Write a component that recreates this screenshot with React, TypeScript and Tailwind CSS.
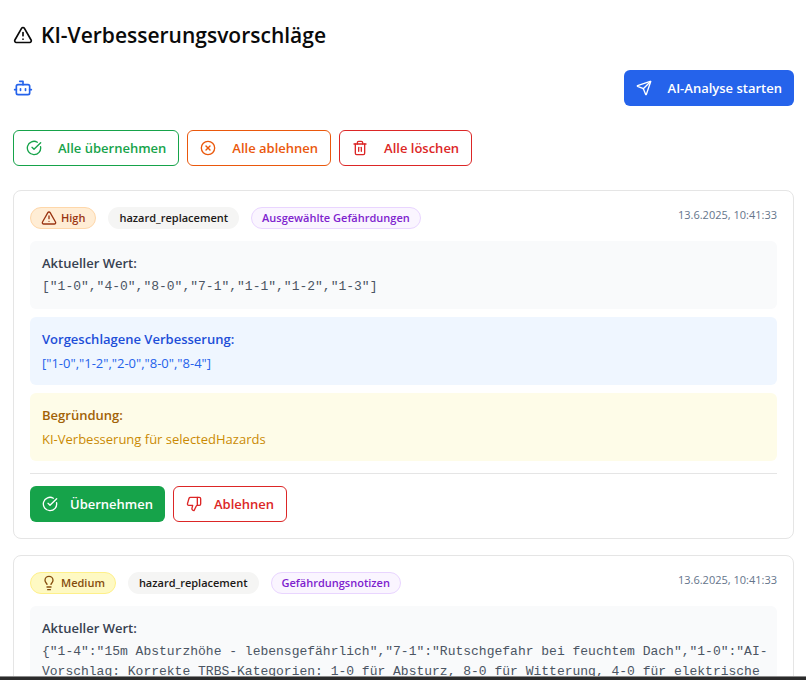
import type { ReactNode } from "react";
import {
  Bot,
  CircleCheckBig,
  CircleX,
  Lightbulb,
  Send,
  ThumbsDown,
  Trash2,
  TriangleAlert,
} from "lucide-react";

type Priority = "High" | "Medium";

interface Suggestion {
  priority: Priority;
  kind: string;
  field: string;
  date: string;
  current: string;
  proposed: string;
  reason: string;
}

const suggestions: Suggestion[] = [
  {
    priority: "High",
    kind: "hazard_replacement",
    field: "Ausgewählte Gefährdungen",
    date: "13.6.2025, 10:41:33",
    current: '["1-0","4-0","8-0","7-1","1-1","1-2","1-3"]',
    proposed: '["1-0","1-2","2-0","8-0","8-4"]',
    reason: "KI-Verbesserung für selectedHazards",
  },
  {
    priority: "Medium",
    kind: "hazard_replacement",
    field: "Gefährdungsnotizen",
    date: "13.6.2025, 10:41:33",
    current:
      '{"1-4":"15m Absturzhöhe - lebensgefährlich","7-1":"Rutschgefahr bei feuchtem Dach","1-0":"AI-Vorschlag: Korrekte TRBS-Kategorien: 1-0 für Absturz, 8-0 für Witterung, 4-0 für elektrische',
    proposed: "",
    reason: "",
  },
];

const badgeStyle: Record<Priority, string> = {
  High: "border-[#fed7aa] bg-[#ffedd5] text-[#9a3412]",
  Medium: "border-[#fef08a] bg-[#fef9c3] text-[#854d0e]",
};

function Button({ tone, icon, children }: { tone: string; icon: ReactNode; children: ReactNode }) {
  return (
    <button
      type="button"
      className={`flex h-9 items-center rounded-md px-3 text-[13px] leading-5 font-semibold whitespace-nowrap ${tone}`}
    >
      {icon}
      {children}
    </button>
  );
}

function Badge({ tone, children }: { tone: string; children: ReactNode }) {
  return (
    <span
      className={`flex items-center gap-1 rounded-full border px-2.5 py-0.5 text-[11px] leading-4 font-semibold whitespace-nowrap ${tone}`}
    >
      {children}
    </span>
  );
}

function Panel({ tone, title, children }: { tone: string; title: string; children: ReactNode }) {
  return (
    <section className={`flex flex-col gap-1 rounded-md py-3 pr-2 pl-3 ${tone}`}>
      <h3 className="text-[13px] leading-5 font-semibold">{title}</h3>
      {children}
    </section>
  );
}

function SuggestionCard({ item }: { item: Suggestion }) {
  return (
    <article className="rounded-lg border border-[#e5e5e5] bg-white p-4">
      <header className="flex items-start justify-between">
        <div className="flex items-center gap-3">
          <Badge tone={badgeStyle[item.priority]}>
            {item.priority === "High" ? <TriangleAlert size={16} /> : <Lightbulb size={16} />}
            {item.priority}
          </Badge>
          <Badge tone="border-transparent bg-[#f5f5f4] text-[#1c1917]">{item.kind}</Badge>
          <Badge tone="border-[#e9d5ff] bg-[#faf5ff] text-[#7e22ce]">{item.field}</Badge>
        </div>
        <time className="text-[11px] leading-4 text-[#64748b]">{item.date}</time>
      </header>
      <div className="mt-3 flex flex-col gap-2">
        <Panel tone="bg-[#f9fafb] text-[#374151]" title="Aktueller Wert:">
          <p className="font-['Liberation_Mono',monospace] text-[13px] leading-5 text-[#4b5563]">{item.current}</p>
        </Panel>
        {item.proposed && (
          <Panel tone="bg-[#eff6ff] text-[#1d4ed8]" title="Vorgeschlagene Verbesserung:">
            <p className="text-[13px] leading-5 text-[#2563eb]">{item.proposed}</p>
          </Panel>
        )}
        {item.reason && (
          <Panel tone="bg-[#fefce8] text-[#a16207]" title="Begründung:">
            <p className="text-[13px] leading-5 text-[#ca8a04]">{item.reason}</p>
          </Panel>
        )}
      </div>
      <footer className="mt-3 flex gap-2 border-t border-[#e5e5e5] pt-3">
        <Button tone="gap-3 bg-[#16a34a] text-white" icon={<CircleCheckBig size={16} />}>
          Übernehmen
        </Button>
        <Button tone="gap-3 border border-[#dc2626] bg-white text-[#dc2626]" icon={<ThumbsDown size={16} />}>
          Ablehnen
        </Button>
      </footer>
    </article>
  );
}

export default function App() {
  return (
    <div className="flex h-screen flex-col bg-white font-['Open_Sans','Noto_Sans',sans-serif] text-[#0a0a0a]">
      <main className="min-h-0 flex-1 overflow-hidden pt-5 pr-3 pl-[13px]">
        <h1 className="flex items-center gap-2 text-[21px] leading-[30px] font-semibold">
          <TriangleAlert size={20} />
          KI-Verbesserungsvorschläge
        </h1>
        <div className="mt-5 flex items-center justify-between">
          <Bot size={20} className="text-[#2563eb]" />
          <Button tone="gap-4 bg-[#2563eb] text-white" icon={<Send size={16} />}>
            AI-Analyse starten
          </Button>
        </div>
        <div className="mt-6 flex gap-2">
          <Button tone="gap-4 border border-[#16a34a] bg-white text-[#16a34a]" icon={<CircleCheckBig size={16} />}>
            Alle übernehmen
          </Button>
          <Button tone="gap-4 border border-[#ea580c] bg-white text-[#ea580c]" icon={<CircleX size={16} />}>
            Alle ablehnen
          </Button>
          <Button tone="gap-4 border border-[#dc2626] bg-white text-[#dc2626]" icon={<Trash2 size={16} />}>
            Alle löschen
          </Button>
        </div>
        <div className="mt-6 flex flex-col gap-4">
          {suggestions.map((item) => (
            <SuggestionCard key={item.field} item={item} />
          ))}
        </div>
      </main>
      <div className="h-1 shrink-0 border-t border-[#8a8a8a] bg-[#2b2b2b]" />
    </div>
  );
}
